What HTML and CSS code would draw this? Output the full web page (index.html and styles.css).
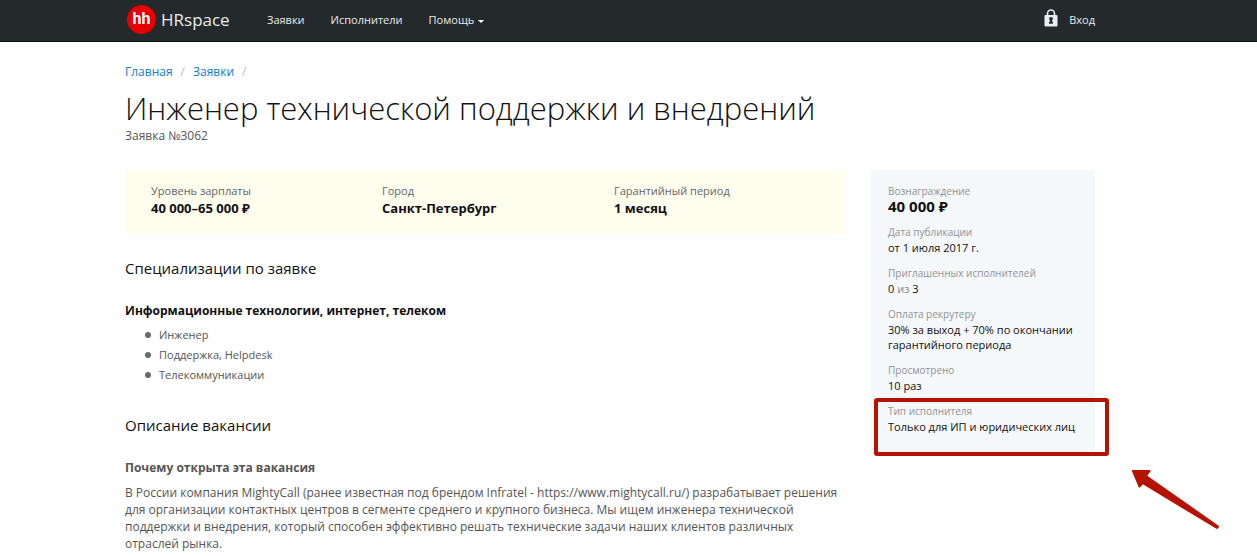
FILE: index.html
```html
<!DOCTYPE html>
<html lang="ru">
<head>
<meta charset="utf-8">
<title>Инженер технической поддержки и внедрений — HRspace</title>
<link rel="stylesheet" href="styles.css">
</head>
<body>
<header class="topbar">
  <div class="container topbar-inner">
    <a class="brand" href="#">
      <span class="brand-mark">hh</span>
      <span class="brand-name">HRspace</span>
    </a>
    <nav class="nav">
      <a href="#">Заявки</a>
      <a href="#">Исполнители</a>
      <button class="nav-menu" type="button">Помощь<span class="caret"></span></button>
    </nav>
    <a class="login" href="#">
      <svg class="lock" viewBox="0 0 14 18" aria-hidden="true">
        <path d="M3.500 8V4.500a3.500 3.500 0 0 1 7 0V8" fill="none" stroke="#e6eff3" stroke-width="1.600"/>
        <rect x="0.500" y="6" width="13" height="11.500" rx="1" fill="#e6eff3"/>
        <path d="M5.300 8.200h3.400v2.800H8v1.600h.9v2.200H5.100v-2.200H6V11h-.7z" fill="#24292c"/>
      </svg>
      Вход
    </a>
  </div>
</header>
<div class="container page">
  <nav class="breadcrumbs">
    <a href="#">Главная</a><span>/</span><a href="#">Заявки</a><span>/</span>
  </nav>
  <h1>Инженер технической поддержки и внедрений</h1>
  <p class="request-number">Заявка №3062</p>
  <div class="columns">
    <main>
      <dl class="summary">
        <div><dt>Уровень зарплаты</dt><dd>40 000–65 000 ₽</dd></div>
        <div><dt>Город</dt><dd>Санкт-Петербург</dd></div>
        <div><dt>Гарантийный период</dt><dd>1 месяц</dd></div>
      </dl>
      <section class="specs">
        <h2>Специализации по заявке</h2>
        <h3>Информационные технологии, интернет, телеком</h3>
        <ul>
          <li>Инженер</li>
          <li>Поддержка, Helpdesk</li>
          <li>Телекоммуникации</li>
        </ul>
      </section>
      <section class="description">
        <h2>Описание вакансии</h2>
        <h3>Почему открыта эта вакансия</h3>
        <p>В России компания MightyCall (ранее известная под брендом Infratel - https://www.mightycall.ru/) разрабатывает решения для организации контактных центров в сегменте среднего и крупного бизнеса. Мы ищем инженера технической поддержки и внедрения, который способен эффективно решать технические задачи наших клиентов различных отраслей рынка.</p>
      </section>
    </main>
    <aside>
      <dl class="facts">
        <div class="reward"><dt>Вознаграждение</dt><dd>40 000 ₽</dd></div>
        <div><dt>Дата публикации</dt><dd>от 1 июля 2017 г.</dd></div>
        <div><dt>Приглашенных исполнителей</dt><dd>0 <span class="muted">из</span> 3</dd></div>
        <div><dt>Оплата рекрутеру</dt><dd>30% за выход + 70% по окончании гарантийного периода</dd></div>
        <div><dt>Просмотрено</dt><dd>10 раз</dd></div>
        <div class="marked"><dt>Тип исполнителя</dt><dd>Только для ИП и юридических лиц</dd>
          <span class="frame"></span>
          <svg class="arrow" viewBox="0 0 90 62" aria-hidden="true">
            <path d="M3 3H19.500L16 8L88 58.500L87 60L12.500 15L9.500 18.500Z" fill="#b51300" stroke="#b51300" stroke-width="2" stroke-linejoin="round"/>
          </svg>
        </div>
      </dl>
    </aside>
  </div>
</div>
</body>
</html>
```
FILE: styles.css
```css
* { box-sizing: border-box; }
body {
  margin: 0;
  background: #fff;
  color: #111;
  font-family: "Open Sans", "Noto Sans", sans-serif;
  font-size: 12px;
  line-height: 17px;
}
h1, h2, h3, p, ul, dl, dd { margin: 0; padding: 0; }
a { text-decoration: none; }
.container { max-width: 1095px; padding-left: 125px; }

.topbar { background: #24292c; border-bottom: 1px solid #0a0c0d; }
.topbar-inner { display: flex; align-items: center; height: 41px; padding-bottom: 2px; }
.topbar a, .nav-menu { color: #e9eced; font-size: 11px; }
.brand { display: flex; align-items: center; gap: 5px; padding-left: 2px; width: 142px; }
.brand-mark {
  width: 29px; height: 29px; border-radius: 50%;
  background: #e60000; color: #fff;
  font: bold 16px/28px Roboto, sans-serif; text-align: center;
}
.brand-name { font: 17px/24px "Open Sans", sans-serif; }
.nav { display: flex; align-items: center; gap: 26px; }
.nav-menu {
  display: flex; align-items: center; gap: 4px;
  padding: 0; border: 0; background: none; font-family: inherit; line-height: 17px;
}
.caret { margin-top: 3px; border: 3px solid transparent; border-top-color: #fff; border-bottom: 0; }
.login { display: flex; align-items: center; gap: 11px; margin-left: auto; }
.lock { width: 14px; height: 18px; margin-bottom: 4px; }

.breadcrumbs { display: flex; gap: 8px; padding-top: 21px; }
.breadcrumbs a { color: #0f7dc7; }
.breadcrumbs span { color: #bbb; }
h1 { margin-top: 8px; font-size: 31px; line-height: 40px; font-weight: 300; }
.request-number { color: #555; line-height: 16px; }
.columns { display: flex; align-items: flex-start; gap: 25px; margin-top: 26px; }
main { flex: 1; }
.summary {
  display: grid; grid-template-columns: 231px 232px 1fr;
  padding: 12px 26px 17px; background: #fffdee;
}
.summary dt { color: #666; font-size: 11px; line-height: 18px; }
.summary dd { font-size: 13px; font-weight: bold; line-height: 17px; }
h2 { font-size: 15px; line-height: 20px; font-weight: normal; }
h3 { font-size: 12px; line-height: 18px; }
.specs { padding-top: 24px; }
.specs h3 { margin-top: 24px; }
.specs ul { margin-top: 5px; padding-left: 20px; list-style: none; color: #555; font-size: 11px; line-height: 20px; }
.specs li { display: flex; align-items: center; gap: 8px; }
.specs li::before { content: ""; width: 6px; height: 6px; border-radius: 50%; background: #666b6f; }
.description { padding-top: 30px; color: #555; }
.description h2 { color: #111; }
.description h3 { margin-top: 24px; }
.description p { margin-top: 7px; }

aside { flex: 0 0 224px; background: #f4f8fb; }
.facts { display: grid; gap: 10px; padding: 13px 17px 19px; font-size: 11px; line-height: 15px; }
.facts dt { color: #8f9396; font-size: 10px; line-height: 16px; }
.facts .reward dd { font-size: 15px; font-weight: bold; }
.muted { color: #888; }
.marked { position: relative; }
.frame { position: absolute; inset: -5px -31px -22px -14px; border: 4px solid #b51300; border-radius: 3px; }
.arrow { position: absolute; left: 242px; top: 65px; width: 90px; height: 62px; }
```
